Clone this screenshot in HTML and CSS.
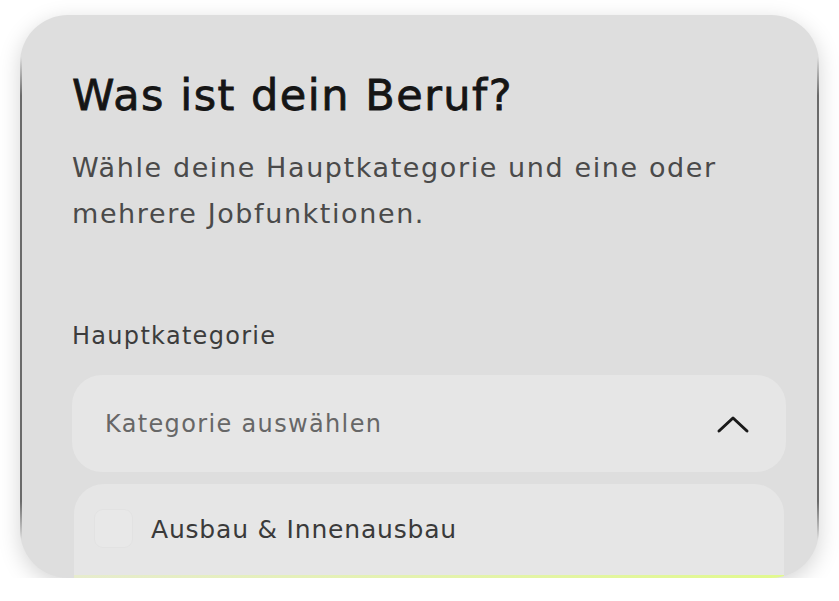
FILE: index.html
```html
<!DOCTYPE html>
<html lang="de">
<head>
<meta charset="utf-8">
<title>Was ist dein Beruf?</title>
<link rel="stylesheet" href="styles.css">
</head>
<body>
<main class="card">
  <h1 class="title">Was ist dein Beruf?</h1>
  <p class="subtitle">Wähle deine Hauptkategorie und eine oder mehrere Jobfunktionen.</p>
  <label class="field-label">Hauptkategorie</label>
  <div class="select">
    <span class="select-text">Kategorie auswählen</span>
    <svg class="chevron" width="34" height="22" viewBox="0 0 34 22" aria-hidden="true">
      <path d="M3 18 L17 5 L31 18" fill="none" stroke="#1a1a1a" stroke-width="3" stroke-linecap="round" stroke-linejoin="round"/>
    </svg>
  </div>
  <div class="options">
    <div class="option">
      <span class="checkbox"></span>
      <span class="option-text">Ausbau &amp; Innenausbau</span>
    </div>
    <div class="accent"></div>
  </div>
</main>
</body>
</html>
```
FILE: styles.css
```css
html, body {
  margin: 0;
  padding: 0;
  background: #ffffff;
}
body {
  padding: 15px 20px 0 20px;
  font-family: "DejaVu Sans", Inter, sans-serif;
}
.card {
  position: relative;
  box-sizing: border-box;
  width: 799px;
  height: 563px;
  background: #dedede;
  border-radius: 48px;
  overflow: hidden;
  padding: 54px 33px 0 52px;
  box-shadow: 0 6px 22px rgba(0, 0, 0, 0.17);
  display: flex;
  flex-direction: column;
}
.card::before,
.card::after {
  content: "";
  position: absolute;
  top: 42px;
  bottom: 38px;
  width: 2px;
  background: linear-gradient(to bottom, rgba(100,100,100,0), #6a6a6a 8%, #6a6a6a 92%, rgba(100,100,100,0));
}
.card::before {
  left: 0;
}
.card::after {
  right: 0;
}
.title {
  margin: 0;
  font-size: 43px;
  font-weight: 400;
  line-height: 52px;
  color: #151515;
  letter-spacing: 1.5px;
  -webkit-text-stroke: 0.8px #151515;
}
.subtitle {
  margin: 24px 0 0 0;
  font-size: 27px;
  line-height: 46px;
  color: #4a4a4a;
  letter-spacing: 1.6px;
  width: 690px;
}
.field-label {
  margin-top: 83px;
  font-size: 24px;
  line-height: 32px;
  color: #3c3c3c;
  letter-spacing: 1.3px;
}
.select {
  margin-top: 23px;
  height: 97px;
  flex: none;
  border-radius: 30px;
  background: #e6e6e6;
  display: flex;
  align-items: center;
  justify-content: space-between;
  padding: 0 36px 0 33px;
}
.select-text {
  font-size: 24px;
  color: #676767;
  letter-spacing: 1.35px;
}
.chevron {
  display: block;
}
.options {
  margin: 12px 2px 0 2px;
  flex: 1;
  background: #e6e6e6;
  border-radius: 30px 30px 0 0;
  display: flex;
  flex-direction: column;
  padding: 25px 0 0 20px;
}
.option {
  display: flex;
  gap: 18px;
  flex: 1;
  align-items: flex-start;
}
.checkbox {
  width: 39px;
  height: 39px;
  box-sizing: border-box;
  border: 1.5px solid #e2e2e2;
  background: #e8e8e8;
  border-radius: 9px;
}
.option-text {
  font-size: 25px;
  line-height: 42px;
  color: #3a3a3a;
  letter-spacing: 0.8px;
}
.accent {
  height: 3px;
  margin-left: -20px;
  background: linear-gradient(to right, rgba(232, 247, 160, 0.35), #e1f98e);
}
```
